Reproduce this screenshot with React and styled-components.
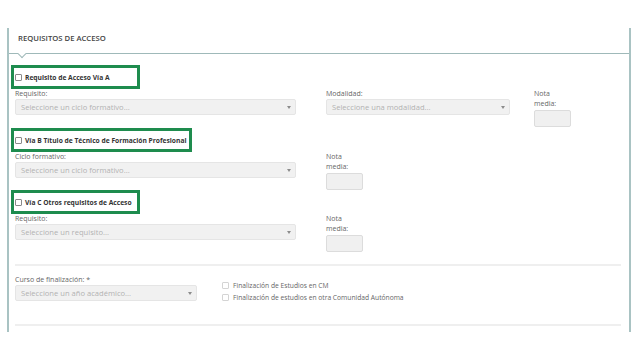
import React from 'react';
import styled, { createGlobalStyle } from 'styled-components';

const GlobalStyle = createGlobalStyle`
    html, body {
        margin: 0;
        padding: 0;
        background: #ffffff;
        font-family: "Open Sans", "Liberation Sans", sans-serif;
    }
`;

const Panel = styled.section`
    margin: 28px 9px 0 7px;
    height: 304px;
    border-left: 2px solid #a9c3c3;
    border-right: 2px solid #a9c3c3;
    box-sizing: border-box;
`;

const PanelHeader = styled.header`
    position: relative;
    height: 26px;
    box-sizing: border-box;
    padding: 5px 0 0 9px;
    border-bottom: 1px solid #9fb9b9;
    font-size: 7.7px;
    font-weight: 600;
    color: #444;

    &::after {
        content: '';
        position: absolute;
        left: 10px;
        bottom: -4px;
        width: 5px;
        height: 5px;
        background: #fff;
        border-right: 1px solid #9fb9b9;
        border-bottom: 1px solid #9fb9b9;
        transform: rotate(45deg);
    }
`;

const PanelBody = styled.div`
    padding: 11px 8px 0 6px;
`;

const Highlight = styled.div`
    display: flex;
    align-items: center;
    gap: 3px;
    width: fit-content;
    height: 24px;
    box-sizing: border-box;
    margin-left: -4px;
    padding: 0 ${ p => p.$pad }px 0 1px;
    border: 3px solid #1e8c4e;
    font-size: 6.7px;
    font-weight: 700;
    color: #333;
`;

const Check = styled.span`
    width: 5px;
    height: 5px;
    flex: none;
    border: 1px solid ${ p => (p.$light ? '#d4d4d4' : '#8a8a8a') };
    border-radius: 1px;
    background: #fff;
`;

const Row = styled.div`
    display: grid;
    grid-template-columns: 311px 208px auto;
    margin-bottom: ${ p => p.$gap || 0 }px;
`;

const Field = styled.div`
    display: flex;
    flex-direction: column;
`;

const Label = styled.label`
    font-size: 7px;
    line-height: 10px;
    color: #666;
    max-width: ${ p => (p.$narrow ? '30px' : 'none') };
`;

const Select = styled.div`
    display: flex;
    align-items: center;
    justify-content: space-between;
    width: ${ p => p.$w }px;
    height: 16px;
    box-sizing: border-box;
    padding: 0 4px 0 5px;
    background: #f1f1f1;
    border: 1px solid #e5e5e5;
    border-radius: 2px;
    font-size: 7.6px;
    color: #b2b2b2;
`;

const Caret = styled.span`
    width: 0;
    height: 0;
    border-left: 2px solid transparent;
    border-right: 2px solid transparent;
    border-top: 3px solid #8c8c8c;
`;

const NotaBox = styled.div`
    width: 37px;
    height: 17px;
    box-sizing: border-box;
    margin-top: 1px;
    background: #f0f0f0;
    border: 1px solid #dcdcdc;
    border-radius: 2px;
`;

const Divider = styled.hr`
    margin: 0;
    border: none;
    border-top: 2px solid #efefef;
`;

const FinalRow = styled.div`
    display: flex;
    gap: 25px;
    height: 58px;
    padding-top: 9px;
    box-sizing: border-box;
`;

const Options = styled.div`
    display: flex;
    flex-direction: column;
    gap: 3px;
    padding-top: 6px;
`;

const Option = styled.div`
    display: flex;
    align-items: center;
    gap: 4px;
    font-size: 6.7px;
    line-height: 9px;
    color: #666;
`;

const Nota = () => (
    <Field>
        <Label $narrow>Nota media:</Label>
        <NotaBox />
    </Field>
);

const Selector = ({ label, placeholder, width }) => (
    <Field>
        <Label>{ label }</Label>
        <Select $w={ width }>
            <span>{ placeholder }</span>
            <Caret />
        </Select>
    </Field>
);

export default function App() {
    return (
        <>
            <GlobalStyle />
            <Panel>
                <PanelHeader>REQUISITOS DE ACCESO</PanelHeader>
                <PanelBody>
                    <Highlight $pad={ 27 }>
                        <Check />
                        Requisito de Acceso Vía A
                    </Highlight>
                    <Row $gap={ 1 }>
                        <Selector label="Requisito:" placeholder="Seleccione un ciclo formativo..." width={ 281 } />
                        <Selector label="Modalidad:" placeholder="Seleccione una modalidad..." width={ 184 } />
                        <Nota />
                    </Row>

                    <Highlight $pad={ 3 }>
                        <Check />
                        Vía B Título de Técnico de Formación Profesional
                    </Highlight>
                    <Row $gap={ 0 }>
                        <Selector label="Ciclo formativo:" placeholder="Seleccione un ciclo formativo..." width={ 281 } />
                        <Nota />
                    </Row>

                    <Highlight $pad={ 5 }>
                        <Check />
                        Vía C Otros requisitos de Acceso
                    </Highlight>
                    <Row $gap={ 12 }>
                        <Selector label="Requisito:" placeholder="Seleccione un requisito..." width={ 281 } />
                        <Nota />
                    </Row>

                    <Divider />
                    <FinalRow>
                        <Selector label="Curso de finalización: *" placeholder="Seleccione un año académico..." width={ 182 } />
                        <Options>
                            <Option><Check $light />Finalización de Estudios en CM</Option>
                            <Option><Check $light />Finalización de estudios en otra Comunidad Autónoma</Option>
                        </Options>
                    </FinalRow>
                    <Divider />
                </PanelBody>
            </Panel>
        </>
    );
}
